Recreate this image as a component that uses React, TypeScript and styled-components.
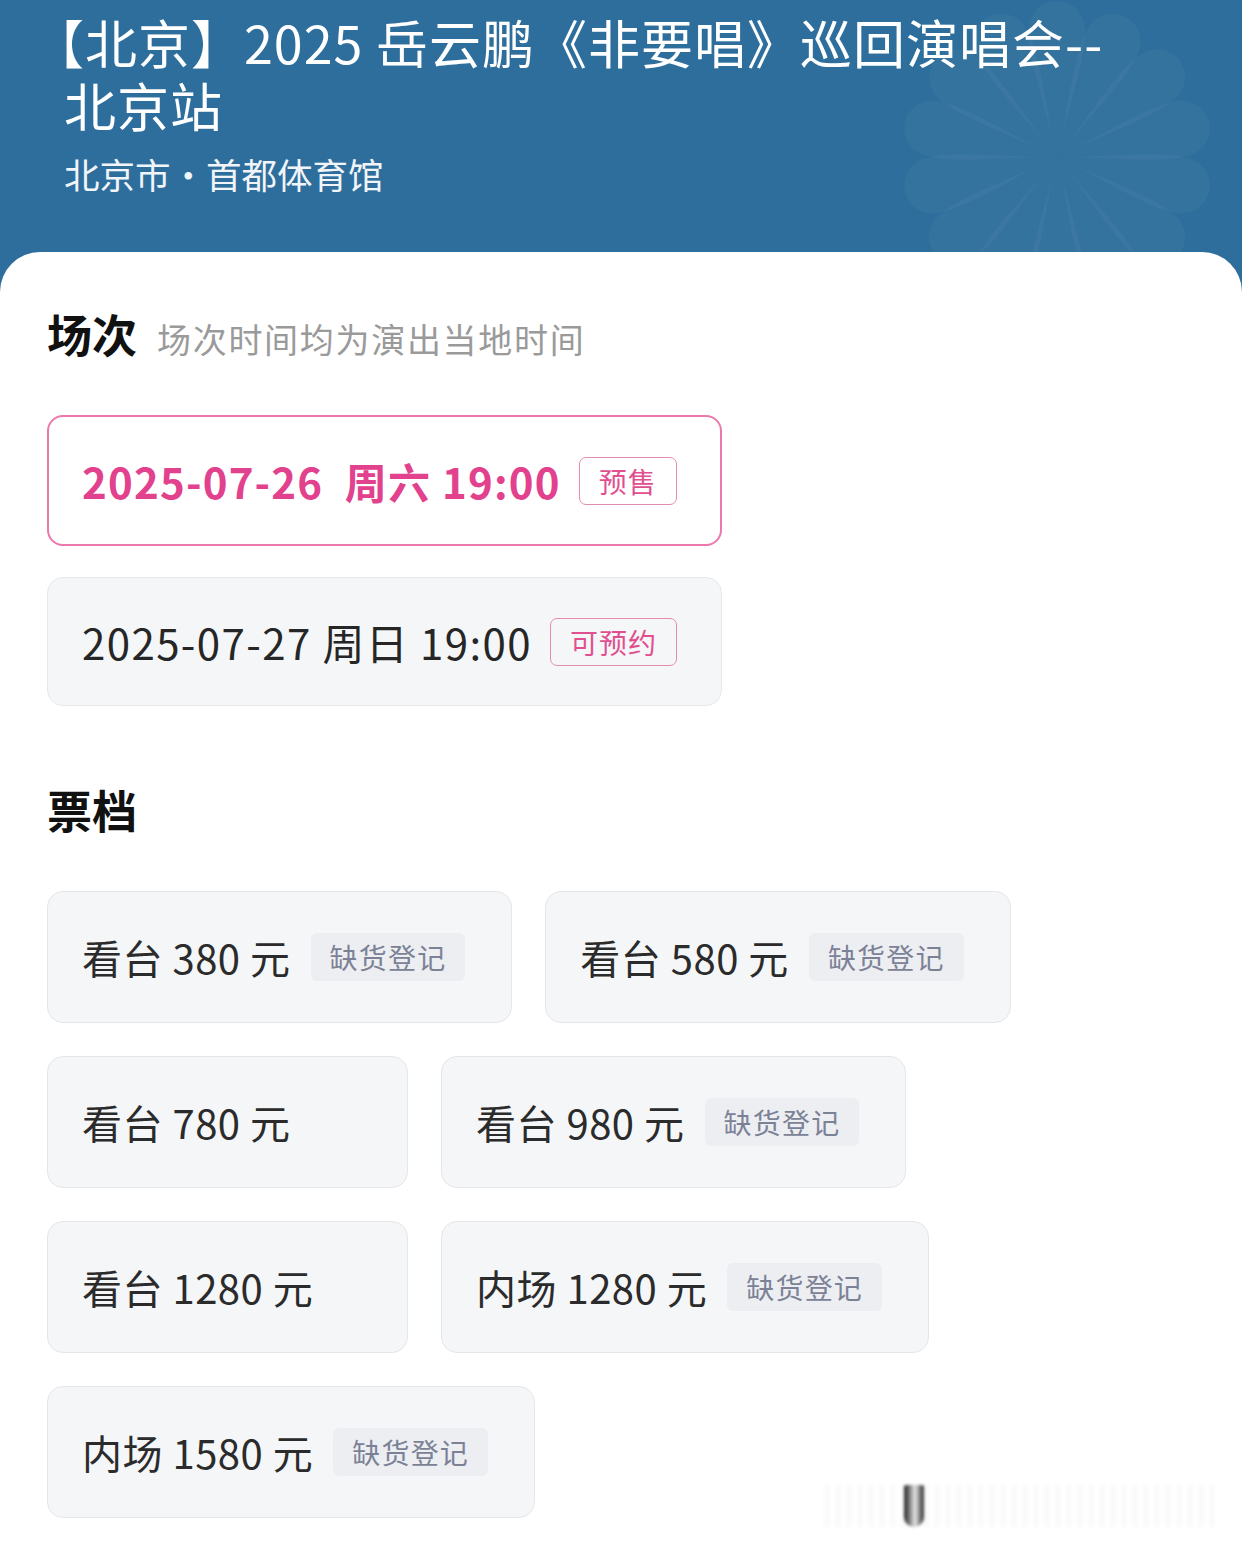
import React from "react";
import styled, { createGlobalStyle } from "styled-components";

const GlobalStyle = createGlobalStyle`
  html, body {
    margin: 0;
    padding: 0;
    background: #ffffff;
  }
  body {
    font-family: "Noto Sans CJK SC", "Noto Sans", sans-serif;
    -webkit-font-smoothing: antialiased;
  }
  * { box-sizing: border-box; }
`;

const Page = styled.div`
  position: relative;
  width: 1242px;
  height: 1552px;
  overflow: hidden;
  background: #2e6e9c;
  display: flex;
  flex-direction: column;
`;

const Header = styled.header`
  position: relative;
  height: 252px;
  padding: 10px 64px 0 64px;
  color: #ffffff;
  flex-shrink: 0;
`;

const Flower = styled.svg`
  position: absolute;
  left: 877px;
  top: -23px;
  width: 360px;
  height: 360px;
  pointer-events: none;
`;

const Title = styled.h1`
  position: relative;
  margin: 0;
  display: flex;
  flex-direction: column;
  font-size: 52px;
  font-weight: 400;
  letter-spacing: 1px;
`;

const TitleLine = styled.span<{ $indent?: number }>`
  display: block;
  height: 63px;
  line-height: 63px;
  margin-left: ${(p) => p.$indent ?? 0}px;
  white-space: nowrap;
`;

const Venue = styled.div`
  position: relative;
  margin-top: 16px;
  font-size: 35.5px;
  line-height: 44px;
  font-weight: 400;
  color: #f1f5f9;
`;

const Panel = styled.main`
  flex: 1;
  background: #ffffff;
  border-radius: 40px 40px 0 0;
  padding: 54px 47px 0 47px;
`;

const SectionHead = styled.div<{ $gap: number }>`
  display: flex;
  align-items: baseline;
  gap: 20px;
  margin-bottom: ${(p) => p.$gap}px;
`;

const SectionTitle = styled.h2`
  margin: 0;
  font-size: 45px;
  line-height: 56px;
  font-weight: 700;
  color: #111111;
`;

const SectionNote = styled.span`
  font-size: 34px;
  line-height: 56px;
  color: #9a9a9a;
  letter-spacing: 1.7px;
`;

const SessionList = styled.div`
  display: flex;
  flex-direction: column;
  gap: 31px;
  margin-bottom: 76px;
`;

const SessionCard = styled.div<{ $active?: boolean }>`
  width: 675px;
  height: ${(p) => (p.$active ? 131 : 129)}px;
  display: flex;
  align-items: center;
  gap: 18px;
  padding-left: ${(p) => (p.$active ? 33 : 34)}px;
  border-radius: 16px;
  background: ${(p) => (p.$active ? "#ffffff" : "#f5f6f8")};
  border: ${(p) => (p.$active ? "2px solid #ec78ac" : "1px solid #e7e8eb")};
`;

const SessionText = styled.span<{ $active?: boolean }>`
  font-size: 42px;
  line-height: 50px;
  font-weight: ${(p) => (p.$active ? 700 : 400)};
  color: ${(p) => (p.$active ? "#e2418d" : "#262626")};
  letter-spacing: ${(p) => (p.$active ? 1.2 : 1.4)}px;
  white-space: pre;
`;

const StatusTag = styled.span`
  display: inline-flex;
  align-items: center;
  justify-content: center;
  height: 48px;
  padding: 0 19px;
  border: 1.5px solid #e48bb2;
  border-radius: 7px;
  font-size: 28px;
  color: #e0508f;
  letter-spacing: 1px;
`;

const TicketGrid = styled.div`
  display: flex;
  flex-wrap: wrap;
  gap: 33px;
  width: 1148px;
`;

const TicketCard = styled.div`
  min-width: 361px;
  height: 132px;
  display: flex;
  align-items: center;
  gap: 20px;
  padding: 0 46px 0 34px;
  background: #f5f6f8;
  border: 1px solid #e5e6ea;
  border-radius: 16px;
`;

const TicketName = styled.span`
  font-size: 40px;
  line-height: 50px;
  color: #2b2b2b;
  letter-spacing: 0.5px;
  white-space: pre;
`;

const SoldOutTag = styled.span`
  display: inline-flex;
  align-items: center;
  height: 48px;
  padding: 0 19px;
  border-radius: 6px;
  background: #eceef2;
  color: #7c8296;
  font-size: 28px;
  letter-spacing: 1.2px;
  white-space: nowrap;
`;

const Watermark = styled.div`
  position: absolute;
  right: 26px;
  bottom: 25px;
  width: 392px;
  height: 42px;
  display: flex;
  align-items: center;
  padding-left: 80px;
  background: repeating-linear-gradient(
    90deg,
    rgba(0, 0, 0, 0.02) 0px,
    rgba(0, 0, 0, 0.02) 6px,
    rgba(0, 0, 0, 0) 6px,
    rgba(0, 0, 0, 0) 11px
  );
  filter: blur(1.5px);
`;

const WatermarkMark = styled.span`
  width: 20px;
  height: 42px;
  border-radius: 2px 2px 10px 10px;
  background: linear-gradient(90deg, #1c1c1c 0%, #9a9a9a 35%, #e8e8e8 55%, #2a2a2a 100%);
  filter: blur(0.6px);
`;

const sessions = [
  { text: "2025-07-26  周六 19:00", tag: "预售", active: true },
  { text: "2025-07-27 周日 19:00", tag: "可预约", active: false },
];

const tickets = [
  { name: "看台 380 元", soldOut: true },
  { name: "看台 580 元", soldOut: true },
  { name: "看台 780 元", soldOut: false },
  { name: "看台 980 元", soldOut: true },
  { name: "看台 1280 元", soldOut: false },
  { name: "内场 1280 元", soldOut: true },
  { name: "内场 1580 元", soldOut: true },
];

const petalAngles = Array.from({ length: 14 }, (_, i) => (360 / 14) * i);

export default function App() {
  return (
    <>
      <GlobalStyle />
      <Page>
        <Header>
          <Flower viewBox="-180 -180 360 360">
            {petalAngles.map((a) => (
              <path
                key={a}
                d="M0,0 C-8,-40 -30,-100 -28,-128 A28,28 0 0 1 28,-128 C30,-100 8,-40 0,0 Z"
                fill="rgba(255,255,255,0.035)"
                transform={`rotate(${a})`}
              />
            ))}
          </Flower>
          <Title>
            <TitleLine $indent={-32}>【北京】2025 岳云鹏《非要唱》巡回演唱会--</TitleLine>
            <TitleLine>北京站</TitleLine>
          </Title>
          <Venue>北京市·首都体育馆</Venue>
        </Header>
        <Panel>
          <SectionHead $gap={48}>
            <SectionTitle>场次</SectionTitle>
            <SectionNote>场次时间均为演出当地时间</SectionNote>
          </SectionHead>
          <SessionList>
            {sessions.map((s) => (
              <SessionCard key={s.text} $active={s.active}>
                <SessionText $active={s.active}>{s.text}</SessionText>
                <StatusTag>{s.tag}</StatusTag>
              </SessionCard>
            ))}
          </SessionList>
          <SectionHead $gap={53}>
            <SectionTitle>票档</SectionTitle>
          </SectionHead>
          <TicketGrid>
            {tickets.map((t) => (
              <TicketCard key={t.name}>
                <TicketName>{t.name}</TicketName>
                {t.soldOut && <SoldOutTag>缺货登记</SoldOutTag>}
              </TicketCard>
            ))}
          </TicketGrid>
        </Panel>
        <Watermark>
          <WatermarkMark />
        </Watermark>
      </Page>
    </>
  );
}
